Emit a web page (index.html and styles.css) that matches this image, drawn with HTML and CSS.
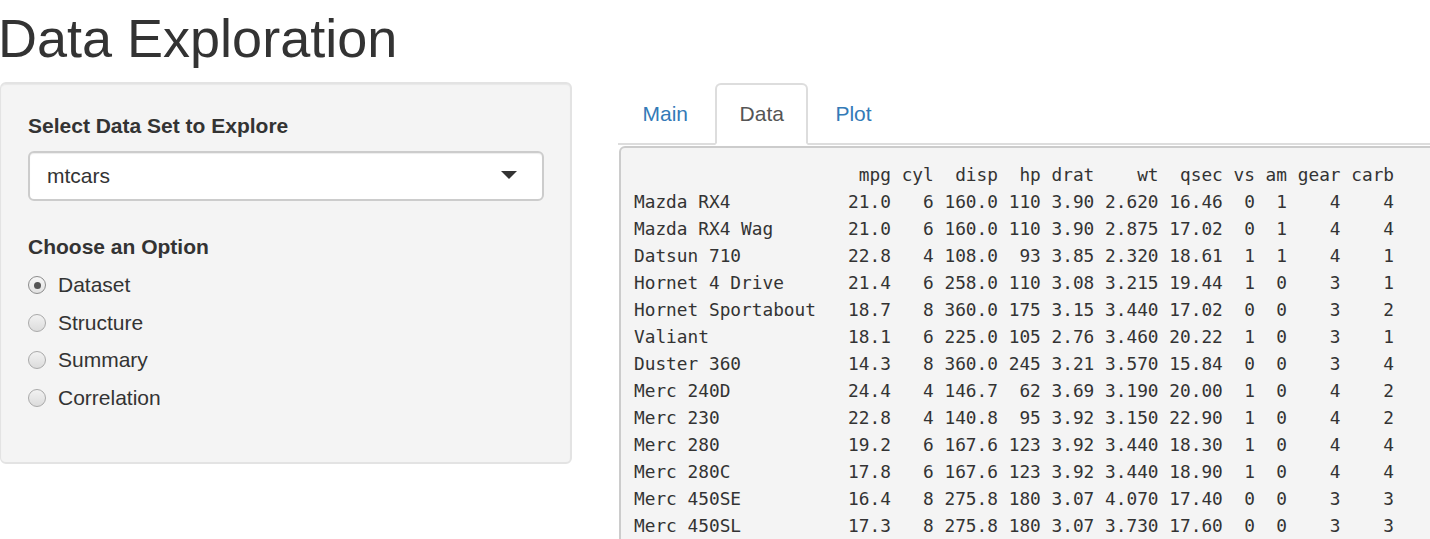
FILE: index.html
```html
<!DOCTYPE html>
<html lang="en">
<head>
<meta charset="utf-8">
<title>Data Exploration</title>
<link rel="stylesheet" href="styles.css">
</head>
<body>
<div class="page">
  <h1 class="title">Data Exploration</h1>
  <div class="layout">
    <aside class="well">
      <label class="control-label">Select Data Set to Explore</label>
      <div class="select-box">
        <span class="select-value">mtcars</span>
        <span class="caret"></span>
      </div>
      <label class="control-label option-label">Choose an Option</label>
      <div class="radio-group">
        <div class="radio checked"><span class="radio-dot"></span><span class="radio-text">Dataset</span></div>
        <div class="radio"><span class="radio-dot"></span><span class="radio-text">Structure</span></div>
        <div class="radio"><span class="radio-dot"></span><span class="radio-text">Summary</span></div>
        <div class="radio"><span class="radio-dot"></span><span class="radio-text">Correlation</span></div>
      </div>
    </aside>
    <main class="main">
      <ul class="tabs">
        <li class="tab"><a>Main</a></li>
        <li class="tab active"><a>Data</a></li>
        <li class="tab"><a>Plot</a></li>
      </ul>
<pre class="output">                     mpg cyl  disp  hp drat    wt  qsec vs am gear carb
Mazda RX4           21.0   6 160.0 110 3.90 2.620 16.46  0  1    4    4
Mazda RX4 Wag       21.0   6 160.0 110 3.90 2.875 17.02  0  1    4    4
Datsun 710          22.8   4 108.0  93 3.85 2.320 18.61  1  1    4    1
Hornet 4 Drive      21.4   6 258.0 110 3.08 3.215 19.44  1  0    3    1
Hornet Sportabout   18.7   8 360.0 175 3.15 3.440 17.02  0  0    3    2
Valiant             18.1   6 225.0 105 2.76 3.460 20.22  1  0    3    1
Duster 360          14.3   8 360.0 245 3.21 3.570 15.84  0  0    3    4
Merc 240D           24.4   4 146.7  62 3.69 3.190 20.00  1  0    4    2
Merc 230            22.8   4 140.8  95 3.92 3.150 22.90  1  0    4    2
Merc 280            19.2   6 167.6 123 3.92 3.440 18.30  1  0    4    4
Merc 280C           17.8   6 167.6 123 3.92 3.440 18.90  1  0    4    4
Merc 450SE          16.4   8 275.8 180 3.07 4.070 17.40  0  0    3    3
Merc 450SL          17.3   8 275.8 180 3.07 3.730 17.60  0  0    3    3
Merc 450SLC         15.2   8 275.8 180 3.07 3.780 18.00  0  0    3    3
Cadillac Fleetwood  10.4   8 472.0 205 2.93 5.250 17.98  0  0    3    4
Lincoln Continental 10.4   8 460.0 215 3.00 5.424 17.82  0  0    3    4
Chrysler Imperial   14.7   8 440.0 230 3.23 5.345 17.42  0  0    3    4
Fiat 128            32.4   4  78.7  66 4.08 2.200 19.47  1  1    4    1
Honda Civic         30.4   4  75.7  52 4.93 1.615 18.52  1  1    4    2
Toyota Corolla      33.9   4  71.1  65 4.22 1.835 19.90  1  1    4    1
Toyota Corona       21.5   4 120.1  97 3.70 2.465 20.01  1  0    3    1
Dodge Challenger    15.5   8 318.0 150 2.76 3.520 16.87  0  0    3    2
AMC Javelin         15.2   8 304.0 150 3.15 3.435 17.30  0  0    3    2
Camaro Z28          13.3   8 350.0 245 3.73 3.840 15.41  0  0    3    4
Pontiac Firebird    19.2   8 400.0 175 3.08 3.845 17.05  0  0    3    2
Fiat X1-9           27.3   4  79.0  66 4.08 1.935 18.90  1  1    4    1
Porsche 914-2       26.0   4 120.3  91 4.43 2.140 16.70  0  1    5    2
Lotus Europa        30.4   4  95.1 113 3.77 1.513 16.90  1  1    5    2
Ford Pantera L      15.8   8 351.0 264 4.22 3.170 14.50  0  1    5    4
Ferrari Dino        19.7   6 145.0 175 3.62 2.770 15.50  0  1    5    6
Maserati Bora       15.0   8 301.0 335 3.54 3.570 14.60  0  1    5    8
Volvo 142E          21.4   4 121.0 109 4.11 2.780 18.60  1  1    4    2</pre>
    </main>
  </div>
</div>
</body>
</html>
```
FILE: styles.css
```css
html, body {
  margin: 0;
  padding: 0;
  background: #fff;
  overflow-x: hidden;
}

body {
  font-family: "Liberation Sans", Arial, sans-serif;
  font-size: 21px;
  line-height: 30px;
  color: #333;
}

.page {
  width: 1900px;
}

.title {
  font-family: "Liberation Sans", Arial, sans-serif;
  font-size: 54px;
  font-weight: normal;
  line-height: 59.4px;
  margin: 9px 0 14px -2px;
  color: #333;
}

.layout {
  display: flex;
  align-items: flex-start;
  gap: 46px;
}

.well {
  box-sizing: border-box;
  width: 572px;
  height: 382px;
  padding: 27px 26px 0 27px;
  background: #f4f4f4;
  border: 2px solid #e3e3e3;
  border-left-width: 1px;
  border-radius: 6px;
  box-shadow: inset 0 1px 1px rgba(0, 0, 0, 0.05);
  display: flex;
  flex-direction: column;
  align-items: stretch;
}

.control-label {
  display: block;
  font-weight: bold;
  font-size: 21px;
  line-height: 30px;
  color: #333;
}

.select-box {
  box-sizing: border-box;
  margin-top: 10px;
  height: 50px;
  padding: 0 25px 0 17px;
  background: #fff;
  border: 2px solid #ccc;
  border-radius: 6px;
  box-shadow: inset 0 1px 1px rgba(0, 0, 0, 0.075);
  display: flex;
  align-items: center;
  justify-content: space-between;
}

.select-value {
  font-size: 21px;
  color: #333;
}

.caret {
  width: 0;
  height: 0;
  border-left: 8px solid transparent;
  border-right: 8px solid transparent;
  border-top: 8px solid #333;
  margin-top: -2px;
}

.option-label {
  margin-top: 31px;
}

.radio-group {
  margin-top: 8px;
  display: flex;
  flex-direction: column;
  gap: 7.5px;
}

.radio {
  height: 30px;
  display: flex;
  align-items: center;
  gap: 12px;
}

.radio-dot {
  box-sizing: border-box;
  width: 18px;
  height: 18px;
  border-radius: 50%;
  border: 1px solid #a9a9a9;
  background: linear-gradient(#f2f2f2, #dcdcdc);
  display: flex;
  align-items: center;
  justify-content: center;
  flex: none;
}

.radio.checked .radio-dot {
  border-color: #8c8c8c;
  background: linear-gradient(#f7f7f7, #e2e2e2);
}

.radio.checked .radio-dot::after {
  content: "";
  width: 7px;
  height: 7px;
  border-radius: 50%;
  background: #555;
}

.radio-text {
  font-size: 21px;
  color: #333;
}

.main {
  width: 1189px;
  margin-top: 1px;
}

.tabs {
  list-style: none;
  margin: 0;
  padding: 0;
  display: flex;
  border-bottom: 2px solid #ddd;
}

.tab {
  margin-bottom: -2px;
}

.tab a {
  display: block;
  padding: 14px 22.5px;
  margin-right: 2.5px;
  line-height: 30px;
  font-size: 21px;
  color: #337ab7;
  border: 2px solid transparent;
  border-radius: 6px 6px 0 0;
}

.tab.active a {
  color: #555;
  background: #fff;
  border-color: #ddd #ddd transparent;
}

.output {
  margin: 1px 0 0 1px;
  padding: 13px;
  background: #f4f4f4;
  border: 2px solid #ccc;
  border-radius: 6px;
  font-family: "DejaVu Sans Mono", "Liberation Mono", monospace;
  font-size: 17.8px;
  line-height: 27px;
  color: #333;
  white-space: pre;
}
```
